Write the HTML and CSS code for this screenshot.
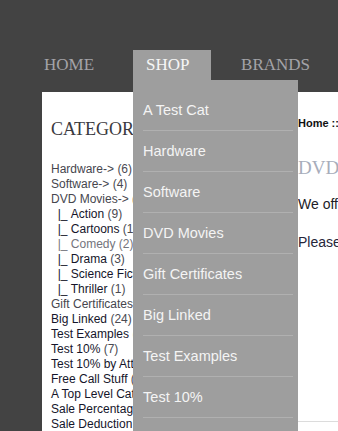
FILE: index.html
```html
<!DOCTYPE html>
<html>
<head>
<meta charset="utf-8">
<title>DVD Movies</title>
<link rel="stylesheet" href="styles.css">
</head>
<body>
<header class="header">
  <nav class="topnav">
    <ul class="nav-list">
      <li class="nav-item nav-home"><a href="#">Home</a></li>
      <li class="nav-item nav-shop is-active">
        <a href="#">Shop</a>
        <ul class="dropdown">
          <li><a href="#">A Test Cat</a></li>
          <li><a href="#">Hardware</a></li>
          <li><a href="#">Software</a></li>
          <li><a href="#">DVD Movies</a></li>
          <li><a href="#">Gift Certificates</a></li>
          <li><a href="#">Big Linked</a></li>
          <li><a href="#">Test Examples</a></li>
          <li><a href="#">Test 10%</a></li>
          <li><a href="#">Test 10% by Attributes</a></li>
        </ul>
      </li>
      <li class="nav-item nav-brands"><a href="#">Brands</a></li>
    </ul>
  </nav>
</header>
<main class="panel">
  <aside class="sidebar">
    <h3 class="side-title">Categories</h3>
    <ul class="cat-list">
      <li><a class="cat parent" href="#">Hardware-&gt;</a> <span class="count">(6)</span></li>
      <li><a class="cat parent" href="#">Software-&gt;</a> <span class="count">(4)</span></li>
      <li><a class="cat parent" href="#">DVD Movies-&gt;</a> <span class="count">(17)</span></li>
      <li><a class="cat" href="#">&nbsp;&nbsp;|_&nbsp;Action</a> <span class="count">(9)</span></li>
      <li><a class="cat" href="#">&nbsp;&nbsp;|_&nbsp;Cartoons</a> <span class="count">(1)</span></li>
      <li><a class="cat visited" href="#">&nbsp;&nbsp;|_&nbsp;Comedy</a> <span class="count visited">(2)</span></li>
      <li><a class="cat" href="#">&nbsp;&nbsp;|_&nbsp;Drama</a> <span class="count">(3)</span></li>
      <li><a class="cat" href="#">&nbsp;&nbsp;|_&nbsp;Science Fiction</a> <span class="count">(2)</span></li>
      <li><a class="cat" href="#">&nbsp;&nbsp;|_&nbsp;Thriller</a> <span class="count">(1)</span></li>
      <li><a class="cat parent" href="#">Gift Certificates</a> <span class="count">(5)</span></li>
      <li><a class="cat" href="#">Big Linked</a> <span class="count">(24)</span></li>
      <li><a class="cat" href="#">Test Examples</a> <span class="count">(16)</span></li>
      <li><a class="cat" href="#">Test 10%</a> <span class="count">(7)</span></li>
      <li><a class="cat" href="#">Test 10% by Attributes</a> <span class="count">(8)</span></li>
      <li><a class="cat" href="#">Free Call Stuff</a> <span class="count">(3)</span></li>
      <li><a class="cat" href="#">A Top Level Cat</a> <span class="count">(6)</span></li>
      <li><a class="cat" href="#">Sale Percentage</a> <span class="count">(4)</span></li>
      <li><a class="cat" href="#">Sale Deduction</a> <span class="count">(4)</span></li>
    </ul>
  </aside>
  <section class="content">
    <div class="breadcrumb"><a href="#">Home</a> :: DVD Movies</div>
    <h1 class="page-title">DVD Movies</h1>
    <p class="intro">We offer a wide selection of DVD movies in every genre.</p>
    <p class="note">Please select a category to browse our titles.</p>
    <div class="divider"></div>
  </section>
</main>
</body>
</html>
```

FILE: styles.css
```css
html, body {
  margin: 0;
  padding: 0;
  overflow: hidden;
}
body {
  background: #434343;
  font-family: "Liberation Sans", Arial, sans-serif;
  width: 338px;
  height: 431px;
}
a { text-decoration: none; color: inherit; }
ul { list-style: none; margin: 0; padding: 0; }

.header {
  padding-top: 50px;
  height: 42px;
  box-sizing: content-box;
  position: relative;
  z-index: 5;
}
.nav-list {
  display: flex;
  height: 30px;
  width: 800px;
}
.nav-item {
  font-family: "Liberation Serif", "Times New Roman", serif;
  font-size: 17px;
  line-height: 30px;
  text-transform: uppercase;
  color: #a3a3a8;
  position: relative;
  white-space: nowrap;
}
.nav-home { margin-left: 44px; }
.nav-shop {
  margin-left: 39px;
  width: 78px;
  box-sizing: border-box;
  padding-left: 13px;
  background: #9e9e9e;
  color: #f6f6f6;
}
.nav-brands { margin-left: 30px; }

.dropdown {
  position: absolute;
  top: 30px;
  left: 0;
  width: 165px;
  height: 400px;
  padding-top: 10px;
  background: #9e9e9e;
  overflow: hidden;
  box-sizing: border-box;
}
.dropdown li {
  margin: 0 5px 0 10px;
  height: 40px;
  line-height: 40px;
  border-bottom: 1px solid #b0b0b0;
  font-family: "Liberation Sans", Arial, sans-serif;
  font-size: 14.5px;
  text-transform: none;
  color: #f4f4f4;
}

.panel {
  margin-left: 42px;
  width: 800px;
  min-height: 400px;
  background: #fff;
  display: flex;
}
.sidebar {
  width: 256px;
  flex: none;
  box-sizing: border-box;
  padding: 27px 0 0 9px;
}
.side-title {
  margin: 0;
  font-family: "Liberation Serif", "Times New Roman", serif;
  font-weight: normal;
  font-size: 18px;
  line-height: 20px;
  text-transform: uppercase;
  color: #3a3a40;
}
.cat-list {
  margin-top: 23px;
  font-size: 12px;
  line-height: 15px;
  white-space: nowrap;
}
.cat { color: #15152a; }
.cat.parent { color: #46464e; }
.count { color: #4a4a52; }
.visited { color: #74747c; }

.content {
  flex: 1;
  padding-top: 24px;
  color: #222;
}
.breadcrumb {
  font-size: 11px;
  line-height: 14px;
  font-weight: bold;
  color: #111;
  white-space: nowrap;
}
.page-title {
  margin: 27px 0 0;
  font-family: "Liberation Serif", "Times New Roman", serif;
  font-weight: normal;
  font-size: 19px;
  line-height: 22px;
  color: #a7adbb;
}
.intro, .note {
  font-size: 14px;
  line-height: 18px;
  margin: 16px 0 0;
  white-space: nowrap;
}
.intro { color: #1c1c28; }
.note { margin-top: 20px; color: #26263a; }
.divider {
  margin-top: 170px;
  border-top: 1px solid #dcdcdc;
}
```
